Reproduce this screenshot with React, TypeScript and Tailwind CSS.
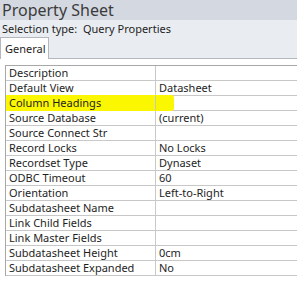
import React from "react";

const rows: [string, string][] = [
  ["Description", ""],
  ["Default View", "Datasheet"],
  ["Column Headings", ""],
  ["Source Database", "(current)"],
  ["Source Connect Str", ""],
  ["Record Locks", "No Locks"],
  ["Recordset Type", "Dynaset"],
  ["ODBC Timeout", "60"],
  ["Orientation", "Left-to-Right"],
  ["Subdatasheet Name", ""],
  ["Link Child Fields", ""],
  ["Link Master Fields", ""],
  ["Subdatasheet Height", "0cm"],
  ["Subdatasheet Expanded", "No"],
];

export default function App() {
  return (
    <div
      className="w-[297px] h-[288px] overflow-hidden bg-white text-[#1e1e1e]"
      style={{ fontFamily: '"Noto Sans", "Open Sans", sans-serif' }}
    >
      {/* title */}
      <div className="h-[20px] bg-[#d4d9e1] pl-[2px] text-[16px] leading-[20px] text-[#3b3b3b]">
        Property Sheet
      </div>
      {/* selection type */}
      <div className="h-[17px] bg-[#e9ecf1] pl-[2px] text-[11px] leading-[17px] whitespace-pre">
        Selection type:  Query Properties
      </div>
      {/* tab strip */}
      <div className="flex h-[22px] bg-[#e9ecf1]">
        <div className="w-[49px] bg-white border-l border-t border-r border-[#b4b8be] pl-[4px] pt-[3px] text-[11px] leading-[16px]">
          General
        </div>
        <div className="flex-1 border-b border-[#b4b8be]" />
      </div>
      {/* panel */}
      <div className="pt-[6px] pl-[5px]">
        <div className="w-[300px] border-t border-l border-[#a8a8a8]">
          {rows.map(([label, value]) => (
            <div key={label} className="relative flex h-[15px] border-b border-[#c8c8c8] text-[11px] leading-[14px]">
              {label === "Column Headings" && (
                <div className="absolute left-0 top-[-1px] h-[16px] w-[168px] bg-[#fbf700] rounded-r-[3px]" />
              )}
              <div className="relative w-[150px] shrink-0 border-r border-[#c8c8c8] pl-[3px] whitespace-nowrap">
                {label}
              </div>
              <div className="relative pl-[3px] whitespace-nowrap">{value}</div>
            </div>
          ))}
        </div>
      </div>
    </div>
  );
}
